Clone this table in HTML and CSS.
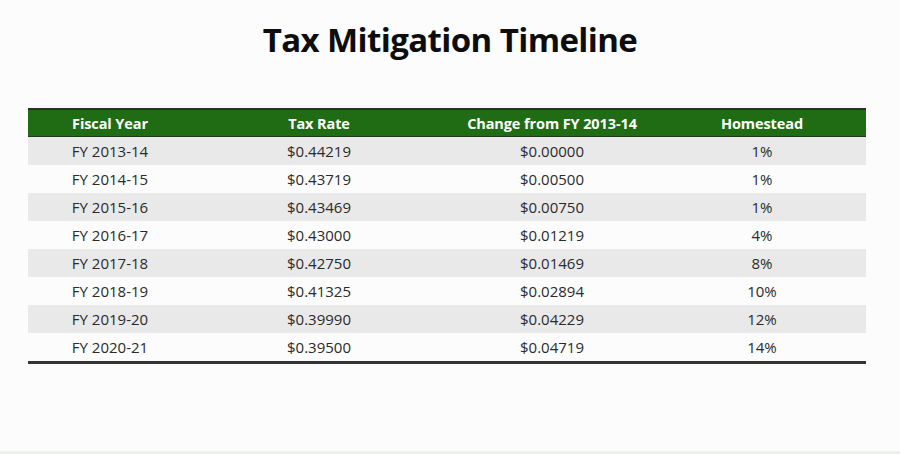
FILE: index.html
```html
<!DOCTYPE html>
<html>
<head>
<meta charset="utf-8">
<link rel="stylesheet" href="styles.css">
</head>
<body>
<div class="slide">
  <h1 class="title">Tax Mitigation Timeline</h1>
  <table class="timeline">
    <colgroup>
      <col class="c1"><col class="c2"><col class="c3"><col class="c4">
    </colgroup>
    <thead>
      <tr><th>Fiscal Year</th><th>Tax Rate</th><th>Change from FY 2013-14</th><th>Homestead</th></tr>
    </thead>
    <tbody>
      <tr><td>FY 2013-14</td><td>$0.44219</td><td>$0.00000</td><td>1%</td></tr>
      <tr><td>FY 2014-15</td><td>$0.43719</td><td>$0.00500</td><td>1%</td></tr>
      <tr><td>FY 2015-16</td><td>$0.43469</td><td>$0.00750</td><td>1%</td></tr>
      <tr><td>FY 2016-17</td><td>$0.43000</td><td>$0.01219</td><td>4%</td></tr>
      <tr><td>FY 2017-18</td><td>$0.42750</td><td>$0.01469</td><td>8%</td></tr>
      <tr><td>FY 2018-19</td><td>$0.41325</td><td>$0.02894</td><td>10%</td></tr>
      <tr><td>FY 2019-20</td><td>$0.39990</td><td>$0.04229</td><td>12%</td></tr>
      <tr><td>FY 2020-21</td><td>$0.39500</td><td>$0.04719</td><td>14%</td></tr>
    </tbody>
  </table>
</div>
<div class="strip"></div>
</body>
</html>
```
FILE: styles.css
```css
html, body {
  margin: 0;
  padding: 0;
}
body {
  background: #fbfcfb;
  font-family: "Open Sans", "Liberation Sans", sans-serif;
  color: #262626;
  width: 900px;
  height: 454px;
  overflow: hidden;
  display: flex;
  flex-direction: column;
}
.slide {
  flex: 1;
  padding-top: 18px;
}
.title {
  margin: 0;
  text-align: center;
  font-size: 33px;
  line-height: 44px;
  font-weight: 700;
  letter-spacing: -0.6px;
  color: #0d0d0d;
  padding-left: 0;
  height: 48px;
}
.timeline {
  margin: 42px 0 0 28px;
  width: 838px;
  border-collapse: collapse;
  table-layout: fixed;
  font-size: 15px;
}
.c1 { width: 164px; }
.c2 { width: 254px; }
.c3 { width: 212px; }
.c4 { width: 208px; }
.timeline thead tr {
  background: #1f6c14;
  border-top: 2px solid #2a2f28;
  border-bottom: 1px solid #1d3a16;
}
.timeline th {
  color: #ffffff;
  font-weight: 700;
  height: 26px;
  padding: 0;
  text-align: center;
  font-size: 14.5px;
  letter-spacing: -0.1px;
}
.timeline td {
  height: 28px;
  padding: 0;
  text-align: center;
  color: #2b2b2b;
}
.timeline tbody tr:nth-child(odd) {
  background: #e9e9e9;
}
.timeline tbody tr:last-child {
  border-bottom: 3px solid #353535;
}
.strip {
  height: 3px;
  background: #eef0ee;
}
```
